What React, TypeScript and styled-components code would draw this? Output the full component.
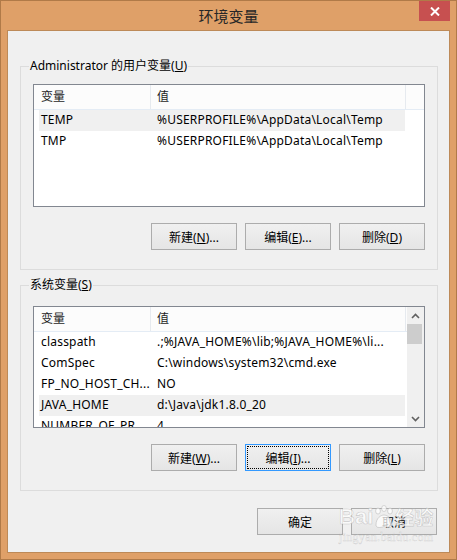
import React from 'react';
import styled, { createGlobalStyle, css } from 'styled-components';

interface EnvVar {
  name: string;
  value: string;
  selected?: boolean;
}

const userVars: EnvVar[] = [
  { name: 'TEMP', value: '%USERPROFILE%\\AppData\\Local\\Temp', selected: true },
  { name: 'TMP', value: '%USERPROFILE%\\AppData\\Local\\Temp' },
];

const systemVars: EnvVar[] = [
  { name: 'classpath', value: '.;%JAVA_HOME%\\lib;%JAVA_HOME%\\li...' },
  { name: 'ComSpec', value: 'C:\\windows\\system32\\cmd.exe' },
  { name: 'FP_NO_HOST_CH...', value: 'NO' },
  { name: 'JAVA_HOME', value: 'd:\\Java\\jdk1.8.0_20', selected: true },
  { name: 'NUMBER_OF_PR...', value: '4' },
];

const GlobalStyle = createGlobalStyle`
  html, body {
    margin: 0;
    padding: 0;
    background: #fff;
  }
  body {
    font-family: "Segoe UI", "Noto Sans", "Noto Sans CJK SC", sans-serif;
    font-size: 12px;
    color: #000;
  }
  * {
    box-sizing: border-box;
  }
`;

const ChevronUp = () => (
  <svg width="9" height="6" viewBox="0 0 9 6">
    <path d="M1 5 L4.5 1.5 L8 5" fill="none" stroke="#606060" strokeWidth="1.6" />
  </svg>
);

const ChevronDown = () => (
  <svg width="9" height="6" viewBox="0 0 9 6">
    <path d="M1 1 L4.5 4.5 L8 1" fill="none" stroke="#606060" strokeWidth="1.6" />
  </svg>
);

const VarList: React.FC<{ vars: EnvVar[]; height: number; scroll?: boolean }> = ({ vars, height, scroll }) => (
  <ListBox $height={height}>
    <ListMain>
      <Header>
        <HeaderCell $width={117} $pad={7}>变量</HeaderCell>
        <HeaderCell $width={255} $pad={6}>值</HeaderCell>
      </Header>
      {vars.map((v) => (
        <Row key={v.name} $selected={v.selected}>
          <NameCell>{v.name}</NameCell>
          <ValueCell>{v.value}</ValueCell>
        </Row>
      ))}
    </ListMain>
    {scroll && (
      <ScrollBar>
        <ScrollArrow><ChevronUp /></ScrollArrow>
        <ScrollTrack>
          <ScrollThumb />
        </ScrollTrack>
        <ScrollArrow><ChevronDown /></ScrollArrow>
      </ScrollBar>
    )}
  </ListBox>
);

const EnvironmentDialog: React.FC = () => {
  return (
    <>
      <GlobalStyle />
      <Window>
        <TitleBar>
          <span />
          <Title>环境变量</Title>
          <CloseButton>
            <svg width="10" height="9" viewBox="0 0 10 9">
              <path d="M1 0.5 L9 8.5 M9 0.5 L1 8.5" stroke="#fff" strokeWidth="2" />
            </svg>
          </CloseButton>
        </TitleBar>

        <Client>
          <Group $top={10}>
            <Legend>Administrator 的用户变量(<Key>U</Key>)</Legend>
            <VarList vars={userVars} height={123} />
            <ButtonRow>
              <Button>新建(<Key>N</Key>)...</Button>
              <Button>编辑(<Key>E</Key>)...</Button>
              <Button>删除(<Key>D</Key>)</Button>
            </ButtonRow>
          </Group>

          <Group $top={13} $gap={7}>
            <Legend>系统变量(<Key>S</Key>)</Legend>
            <VarList vars={systemVars} height={122} scroll />
            <ButtonRow>
              <Button>新建(<Key>W</Key>)...</Button>
              <Button $focused>编辑(<Key>I</Key>)...</Button>
              <Button>删除(<Key>L</Key>)</Button>
            </ButtonRow>
          </Group>

          <FooterRow>
            <Button>确定</Button>
            <Button>取消</Button>
          </FooterRow>
        </Client>

        <Watermark>
          <WatermarkLogo>
            <span>Bai</span>
            <svg width="22" height="24" viewBox="0 0 22 24">
              <g fill="rgba(255,255,255,0.75)" stroke="rgba(150,150,150,0.45)" strokeWidth="0.8">
                <ellipse cx="5" cy="6" rx="2.4" ry="3" />
                <ellipse cx="11" cy="3.5" rx="2.4" ry="3" />
                <ellipse cx="17" cy="6" rx="2.4" ry="3" />
                <path d="M3 20 C3 13 8 10 11 10 C14 10 19 13 19 20 C19 23 15 23 11 21.5 C7 23 3 23 3 20 Z" />
              </g>
            </svg>
            <span>经验</span>
          </WatermarkLogo>
          <WatermarkUrl>jingyan.baidu.com</WatermarkUrl>
        </Watermark>
      </Window>
    </>
  );
};

const Window = styled.div`
  position: relative;
  width: 457px;
  height: 560px;
  background: #dfa068;
  border: 1px solid #b07a48;
  display: flex;
  flex-direction: column;
`;

const TitleBar = styled.div`
  height: 29px;
  display: grid;
  grid-template-columns: 1fr auto 1fr;
  align-items: start;
`;

const Title = styled.div`
  font-family: "Noto Sans CJK SC", sans-serif;
  font-size: 15px;
  line-height: 29px;
  color: #262626;
`;

const CloseButton = styled.div`
  justify-self: end;
  margin-right: 6px;
  width: 31px;
  height: 20px;
  background: #c75050;
  display: flex;
  align-items: center;
  justify-content: center;
`;

const Client = styled.div`
  flex: 1;
  margin: 0 6px 6px;
  background: #f0f0f0;
  border: 1px solid #bd8a58;
  padding: 27px 11px 0 12px;
  display: flex;
  flex-direction: column;
`;

const Group = styled.fieldset<{ $top: number; $gap?: number }>`
  margin: ${(p) => p.$gap || 0}px 0 0;
  min-width: 0;
  border: 1px solid #dcdcdc;
  padding: ${(p) => p.$top}px 12px 19px;
  display: flex;
  flex-direction: column;
`;

const Legend = styled.legend`
  line-height: 16px;
  padding: 0 1px;
  margin-left: -4px;
  color: #000;
`;

const Key = styled.span`
  text-decoration: underline;
`;

const ListBox = styled.div<{ $height: number }>`
  height: ${(p) => p.$height}px;
  border: 1px solid #828790;
  background: #fff;
  display: flex;
  overflow: hidden;
`;

const ListMain = styled.div`
  flex: 1;
  min-width: 0;
  display: flex;
  flex-direction: column;
`;

const Header = styled.div`
  display: flex;
  flex: none;
  height: 25px;
  background: #fcfcfc;
  border-bottom: 1px solid #e4ecf5;
`;

const HeaderCell = styled.div<{ $width: number; $pad: number }>`
  width: ${(p) => p.$width}px;
  padding-left: ${(p) => p.$pad}px;
  border-right: 1px solid #e6eaef;
  line-height: 23px;
  color: #1e1e1e;
`;

const Row = styled.div<{ $selected?: boolean }>`
  display: flex;
  flex: none;
  margin-left: 5px;
  width: 366px;
  height: 21px;
  line-height: 20px;
  letter-spacing: 0.2px;
  white-space: nowrap;
  background: ${(p) => (p.$selected ? '#f0f0f0' : 'transparent')};
`;

const NameCell = styled.div`
  width: 111px;
  padding-left: 2px;
  overflow: hidden;
`;

const ValueCell = styled.div`
  flex: 1;
  padding-left: 7px;
  overflow: hidden;
`;

const ScrollBar = styled.div`
  width: 17px;
  flex: none;
  background: #f0f0f0;
  display: flex;
  flex-direction: column;
`;

const ScrollArrow = styled.div`
  height: 17px;
  flex: none;
  display: flex;
  align-items: center;
  justify-content: center;
`;

const ScrollTrack = styled.div`
  flex: 1;
`;

const ScrollThumb = styled.div`
  width: 15px;
  height: 20px;
  background: #cdcdcd;
`;

const ButtonRow = styled.div`
  display: flex;
  justify-content: flex-end;
  gap: 8px;
  margin-top: 16px;
`;

const FooterRow = styled(ButtonRow)`
  margin-top: 17px;
  padding-right: 1px;
`;

const Button = styled.button<{ $focused?: boolean }>`
  width: 86px;
  height: 27px;
  padding: 0;
  border: 1px solid #acacac;
  border-radius: 0;
  background: linear-gradient(#f0f0f0, #e5e5e5);
  font: inherit;
  color: #000;
  ${(p) =>
    p.$focused &&
    css`
      border-color: #3399ff;
      outline: 1px dotted #000;
      outline-offset: -3px;
    `}
`;

const Watermark = styled.div`
  position: absolute;
  left: 338px;
  top: 503px;
  display: flex;
  flex-direction: column;
  align-items: center;
  pointer-events: none;
`;

const WatermarkLogo = styled.div`
  display: flex;
  align-items: center;
  font-family: "Liberation Sans", sans-serif;
  font-size: 22px;
  font-weight: bold;
  color: rgba(255, 255, 255, 0.7);
  -webkit-text-stroke: 0.6px rgba(150, 150, 150, 0.45);
  line-height: 26px;

  span:last-child {
    font-family: "Noto Sans CJK SC", sans-serif;
    font-size: 19px;
  }
`;

const WatermarkUrl = styled.div`
  font-family: "Liberation Serif", serif;
  font-size: 12px;
  color: rgba(255, 255, 255, 0.75);
  -webkit-text-stroke: 0.4px rgba(150, 150, 150, 0.4);
  letter-spacing: 0.3px;
`;

export default EnvironmentDialog;
